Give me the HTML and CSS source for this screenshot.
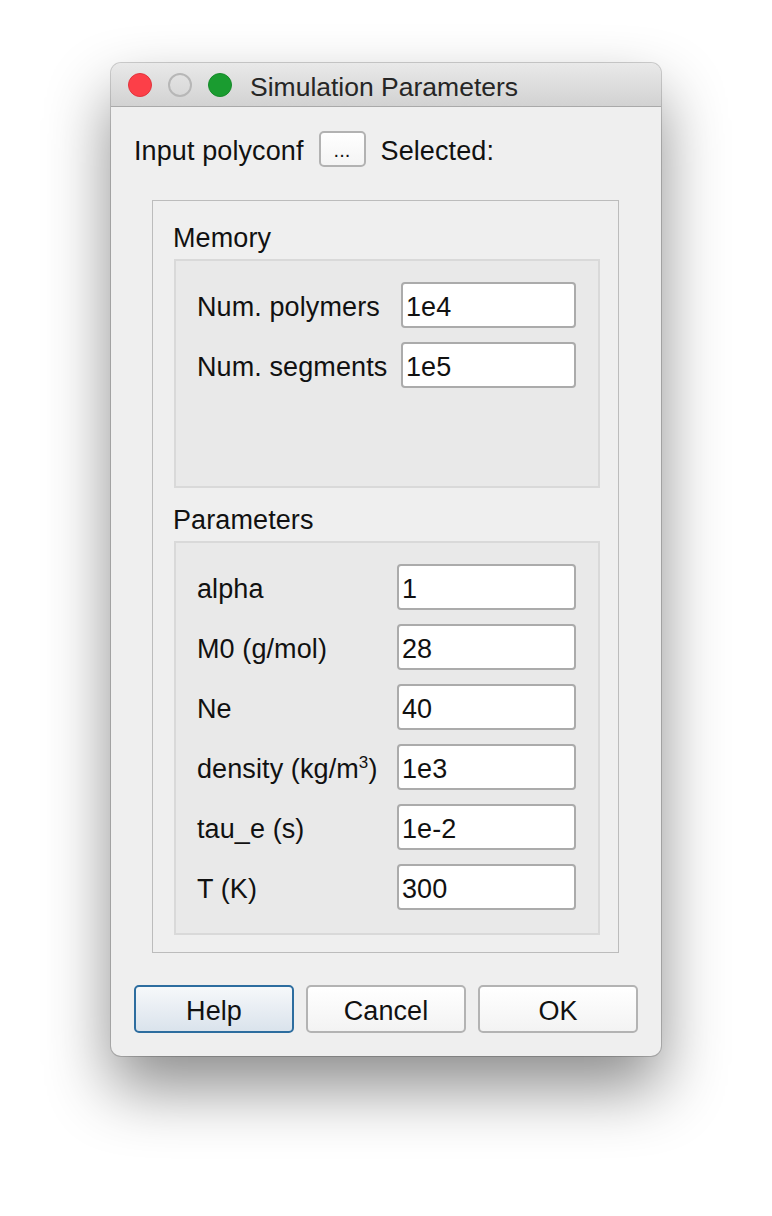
FILE: index.html
```html
<!DOCTYPE html>
<html>
<head>
<meta charset="utf-8">
<link rel="stylesheet" href="styles.css">
</head>
<body>
<div class="window">
  <div class="titlebar">
    <span class="light light-close"></span>
    <span class="light light-min"></span>
    <span class="light light-max"></span>
    <span class="title">Simulation Parameters</span>
  </div>
  <div class="content">
    <div class="input-row">
      <span class="row-text">Input polyconf</span>
      <span class="small-btn">...</span>
      <span class="row-text">Selected:</span>
    </div>
    <div class="outer-group">
      <div class="group-label">Memory</div>
      <div class="inner-box memory">
        <div class="grid grid-memory">
          <span class="lbl">Num. polymers</span><span class="field">1e4</span>
          <span class="lbl">Num. segments</span><span class="field">1e5</span>
        </div>
      </div>
      <div class="group-label second">Parameters</div>
      <div class="inner-box params">
        <div class="grid grid-params">
          <span class="lbl">alpha</span><span class="field">1</span>
          <span class="lbl">M0 (g/mol)</span><span class="field">28</span>
          <span class="lbl">Ne</span><span class="field">40</span>
          <span class="lbl">density (kg/m<sup>3</sup>)</span><span class="field">1e3</span>
          <span class="lbl">tau_e (s)</span><span class="field">1e-2</span>
          <span class="lbl">T (K)</span><span class="field">300</span>
        </div>
      </div>
    </div>
    <div class="buttons">
      <span class="btn btn-default">Help</span>
      <span class="btn">Cancel</span>
      <span class="btn">OK</span>
    </div>
  </div>
</div>
</body>
</html>
```
FILE: styles.css
```css
html, body {
  margin: 0;
  padding: 0;
  background: #ffffff;
}
body {
  min-height: 1216px;
  box-sizing: border-box;
  padding: 63px 0 0 111px;
  font-family: "Liberation Sans", Arial, sans-serif;
  font-size: 27px;
  letter-spacing: 0.1px;
  color: #111;
}
.window {
  width: 550px;
  height: 993px;
  box-sizing: border-box;
  background: #efefef;
  border-radius: 10px;
  box-shadow: 0 0 0 1px rgba(0,0,0,0.18), 0 32px 64px rgba(0,0,0,0.45);
  display: flex;
  flex-direction: column;
  overflow: hidden;
}
.titlebar {
  height: 43px;
  flex: none;
  border-bottom: 1px solid #a9a9a9;
  background: linear-gradient(#e9e9e9, #d2d2d2);
  display: flex;
  align-items: center;
  padding-left: 17px;
  border-radius: 10px 10px 0 0;
}
.light {
  width: 24px;
  height: 24px;
  border-radius: 50%;
  box-sizing: border-box;
  margin-right: 16px;
}
.light-close { background: #fc3f48; border: 1px solid #e0343d; }
.light-min { background: transparent; border: 2px solid #b7b7b7; }
.light-max { background: #1a9c30; border: 1px solid #178a2a; margin-right: 18px; }
.title {
  color: #262626;
  font-size: 26.5px;
  letter-spacing: 0;
  padding-top: 5px;
}
.content {
  padding: 24px 23px 22px 23px;
  display: flex;
  flex-direction: column;
  flex: 1;
}
.input-row {
  display: flex;
  align-items: center;
  height: 36px;
  gap: 15px;
}
.row-text {
  padding-top: 5px;
}
.small-btn {
  width: 47px;
  height: 36px;
  box-sizing: border-box;
  border: 2px solid #b2b2b2;
  border-radius: 5px;
  background: linear-gradient(#ffffff, #f4f4f4);
  display: flex;
  align-items: center;
  justify-content: center;
  font-size: 20px;
  padding-top: 2px;
}
.outer-group {
  margin: 33px 19px 0 18px;
  border: 1px solid #bcbcbc;
  padding: 20px 18px 17px 21px;
}
.group-label {
  height: 32px;
  line-height: 34px;
  margin: 0 0 6px -1px;
}
.group-label.second {
  margin-top: 15px;
}
.inner-box {
  border: 2px solid #d9d9d9;
  background: #e9e9e9;
  box-sizing: border-box;
  padding: 21px 22px 0 21px;
}
.inner-box.memory { height: 229px; }
.inner-box.params { height: 394px; }
.grid {
  display: grid;
  column-gap: 16px;
  row-gap: 14px;
  align-items: center;
}
.grid-memory { grid-template-columns: 188px 1fr; }
.grid-params { grid-template-columns: 184px 1fr; }
.lbl {
  white-space: nowrap;
  padding-top: 4px;
}
.lbl sup {
  font-size: 17px;
  vertical-align: 10px;
  line-height: 0;
}
.field {
  height: 46px;
  box-sizing: border-box;
  border: 2px solid #ababab;
  border-radius: 4px;
  background: #ffffff;
  display: flex;
  align-items: center;
  padding: 4px 0 0 3px;
}
.buttons {
  margin-top: 32px;
  display: flex;
  gap: 12px;
}
.btn {
  width: 160px;
  height: 48px;
  box-sizing: border-box;
  border: 2px solid #b3b3b3;
  border-radius: 5px;
  background: linear-gradient(#ffffff, #f3f3f3);
  display: flex;
  align-items: center;
  justify-content: center;
  padding-top: 4px;
}
.btn-default {
  border-color: #2d6d9f;
  background: linear-gradient(#f6f8fa, #dae3ec);
}
```
